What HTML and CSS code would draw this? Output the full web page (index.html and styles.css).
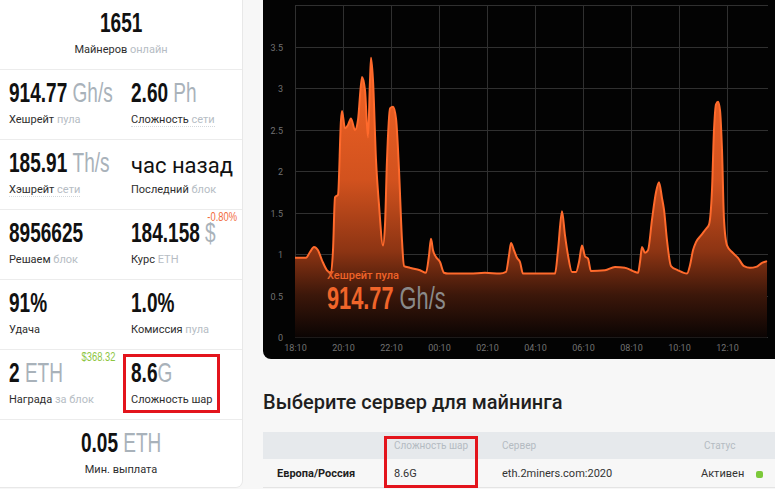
FILE: index.html
```html
<!DOCTYPE html>
<html lang="ru">
<head>
<meta charset="UTF-8">
<meta name="viewport" content="width=device-width, initial-scale=1.0">
<title>2Miners ETH</title>
<link rel="stylesheet" href="styles.css">
</head>
<body>

<div class="page">
    <aside class="stats">
        <div class="stat-row single">
            <div class="stat">
                <div class="val"><span class="num">1651</span></div>
                <div class="label">Майнеров <span class="muted">онлайн</span></div>
            </div>
        </div>
        <div class="stat-row">
            <div class="stat">
                <div class="val"><span class="num">914.77 <span class="unit">Gh/s</span></span></div>
                <div class="label">Хешрейт <span class="muted">пула</span></div>
            </div>
            <div class="stat">
                <div class="val"><span class="num">2.60 <span class="unit">Ph</span></span></div>
                <div class="label"><span class="hint">Сложность <span class="muted">сети</span></span></div>
            </div>
        </div>
        <div class="stat-row">
            <div class="stat">
                <div class="val"><span class="num">185.91 <span class="unit">Th/s</span></span></div>
                <div class="label"><span class="hint">Хэшрейт <span class="muted">сети</span></span></div>
            </div>
            <div class="stat">
                <div class="val words">час назад</div>
                <div class="label">Последний <span class="muted">блок</span></div>
            </div>
        </div>
        <div class="stat-row">
            <div class="stat">
                <div class="val"><span class="num">8956625</span></div>
                <div class="label">Решаем <span class="muted">блок</span></div>
            </div>
            <div class="stat">
                <span class="badge down">-0.80%</span>
                <div class="val"><span class="num">184.158 <span class="unit">$</span></span></div>
                <div class="label">Курс <span class="muted">ETH</span></div>
            </div>
        </div>
        <div class="stat-row">
            <div class="stat">
                <div class="val"><span class="num">91%</span></div>
                <div class="label">Удача</div>
            </div>
            <div class="stat">
                <div class="val"><span class="num">1.0%</span></div>
                <div class="label">Комиссия <span class="muted">пула</span></div>
            </div>
        </div>
        <div class="stat-row">
            <div class="stat">
                <span class="badge up">$368.32</span>
                <div class="val"><span class="num">2 <span class="unit">ETH</span></span></div>
                <div class="label">Награда <span class="muted">за блок</span></div>
            </div>
            <div class="stat">
                <div class="mark mark-share"></div>
                <div class="val"><span class="num">8.6<span class="unit">G</span></span></div>
                <div class="label">Сложность шар</div>
            </div>
        </div>
        <div class="stat-row single">
            <div class="stat">
                <div class="val"><span class="num">0.05 <span class="unit">ETH</span></span></div>
                <div class="label">Мин. выплата</div>
            </div>
        </div>
    </aside>

    <main class="main">
        <div class="chart">
            <svg class="chart-svg" width="530" height="359" viewBox="263 0 530 359">
                <defs>
                    <linearGradient id="hashFill" gradientUnits="userSpaceOnUse" x1="0" y1="50" x2="0" y2="338">
                        <stop offset="0" stop-color="#f46526"/>
                        <stop offset="0.45" stop-color="#d2521e"/>
                        <stop offset="0.7" stop-color="#8c3413"/>
                        <stop offset="0.85" stop-color="#3c170a"/>
                        <stop offset="1" stop-color="#0a0403"/>
                    </linearGradient>
                </defs>
                <g id="grid" stroke="#303030" stroke-width="1"></g>
                <g id="axis" class="axis"></g>
                <path id="hash-area" fill="url(#hashFill)"></path>
                <path id="hash-line" fill="none" stroke="#ff6a2c" stroke-width="2" stroke-linejoin="round"></path>
            </svg>
            <div class="chart-caption">
                <div class="caption-label">Хешрейт пула</div>
                <div class="caption-value"><span class="num">914.77 <span class="unit">Gh/s</span></span></div>
            </div>
        </div>

        <h2 class="servers-title">Выберите сервер для майнинга</h2>
        <div class="servers">
            <table class="server-table">
                <colgroup>
                    <col class="c-region">
                    <col class="c-diff">
                    <col class="c-host">
                    <col>
                </colgroup>
                <thead>
                    <tr><th></th><th>Сложность шар</th><th>Сервер</th><th>Статус</th></tr>
                </thead>
                <tbody>
                    <tr>
                        <td class="region">Европа/Россия</td>
                        <td>8.6G</td>
                        <td>eth.2miners.com:2020</td>
                        <td class="state">Активен<span class="dot"></span></td>
                    </tr>
                </tbody>
            </table>
            <div class="mark mark-table"></div>
        </div>
    </main>
</div>

<script>
    // pool hashrate, [x on the chart, Th/s]
    const hashrate = [
        [295, 0.96], [306, 0.96], [310, 1.03], [314, 1.09], [318, 1.05], [322, 0.93],
        [327, 0.81], [331, 0.78], [333, 1.05], [335, 1.69], [338, 1.72], [341, 2.62],
        [342, 2.73], [345, 2.52], [348, 2.56], [351, 2.64], [355, 2.50], [358, 2.62],
        [362, 3.14], [365, 2.98], [368, 2.41], [370, 3.10], [371, 3.37], [373, 3.10],
        [376, 2.14], [379, 1.60], [383, 1.11], [385, 1.36], [387, 2.14], [390, 2.76],
        [393, 2.78], [396, 2.64], [399, 2.02], [402, 1.17], [404, 0.86], [410, 0.84],
        [420, 0.81], [426, 0.78], [429, 0.99], [431, 1.19], [433, 1.05], [436, 0.97],
        [440, 0.91], [444, 0.78], [448, 0.77], [470, 0.77], [485, 0.78], [500, 0.77],
        [506, 0.79], [509, 0.99], [511, 1.14], [514, 1.05], [517, 0.96], [520, 0.91],
        [523, 0.77], [555, 0.77], [558, 1.05], [562, 1.52], [565, 1.23], [568, 0.99],
        [572, 0.79], [576, 0.79], [579, 0.91], [582, 1.11], [585, 0.98], [588, 0.95],
        [591, 0.80], [605, 0.81], [615, 0.85], [625, 0.84], [633, 0.80], [638, 0.78],
        [640, 0.91], [642, 1.09], [645, 1.02], [648, 1.05], [652, 1.42], [656, 1.75],
        [659, 1.87], [662, 1.68], [664, 1.54], [667, 1.17], [671, 0.86], [678, 0.81],
        [687, 0.77], [690, 0.87], [693, 1.05], [696, 1.15], [701, 1.23], [706, 1.31],
        [709, 1.36], [712, 1.78], [714, 2.50], [716, 2.81], [718, 2.84], [720, 2.74],
        [722, 2.26], [724, 1.42], [727, 1.11], [732, 1.03], [738, 0.96], [744, 0.86],
        [750, 0.84], [756, 0.85], [762, 0.90], [767, 0.92]
    ];

    const svgNS = "http://www.w3.org/2000/svg";
    const zeroY = 337.5;
    const perUnit = 83;
    const left = 295;
    const right = 768;

    function add(parent, tag, attrs, text) {
        const el = document.createElementNS(svgNS, tag);
        for (const key in attrs) el.setAttribute(key, attrs[key]);
        if (text) el.textContent = text;
        parent.appendChild(el);
        return el;
    }

    const grid = document.getElementById("grid");
    const axis = document.getElementById("axis");

    for (let i = 0; i <= 8; i++) {
        const y = Math.floor(zeroY - i * perUnit / 2) + 0.5;
        add(grid, "line", { x1: left, y1: y, x2: right, y2: y });
        if (i < 8) add(axis, "text", { x: 283, y: y + 3, "text-anchor": "end" }, String(i / 2));
    }

    for (let k = 0; k < 10; k++) {
        const x = left + 0.5 + k * 48;
        add(grid, "line", { x1: x, y1: 5.5, x2: x, y2: zeroY });
        const hour = String((18 + k * 2) % 24).padStart(2, "0");
        add(axis, "text", { x: x, y: 351, "text-anchor": "middle" }, hour + ":10");
    }

    // monotone cubic curve through the points, no overshoot on flat parts
    function monotonePath(p) {
        const n = p.length;
        const slopes = [];
        for (let i = 0; i < n - 1; i++) {
            slopes.push((p[i + 1][1] - p[i][1]) / (p[i + 1][0] - p[i][0]));
        }
        const tangents = [slopes[0]];
        for (let i = 1; i < n - 1; i++) {
            const s0 = slopes[i - 1];
            const s1 = slopes[i];
            if (s0 * s1 <= 0) {
                tangents.push(0);
                continue;
            }
            const h0 = p[i][0] - p[i - 1][0];
            const h1 = p[i + 1][0] - p[i][0];
            const mid = (s0 * h1 + s1 * h0) / (h0 + h1);
            tangents.push(2 * Math.sign(s0) * Math.min(Math.abs(s0), Math.abs(s1), 0.5 * Math.abs(mid)));
        }
        tangents.push(slopes[n - 2]);

        let d = "M" + p[0][0] + "," + p[0][1].toFixed(1);
        for (let i = 0; i < n - 1; i++) {
            const h = (p[i + 1][0] - p[i][0]) / 3;
            d += " C" + (p[i][0] + h).toFixed(1) + "," + (p[i][1] + tangents[i] * h).toFixed(1) +
                 " " + (p[i + 1][0] - h).toFixed(1) + "," + (p[i + 1][1] - tangents[i + 1] * h).toFixed(1) +
                 " " + p[i + 1][0] + "," + p[i + 1][1].toFixed(1);
        }
        return d;
    }

    const points = hashrate.map(([x, v]) => [x, zeroY - v * perUnit]);
    const line = monotonePath(points);
    const last = points[points.length - 1][0];
    document.getElementById("hash-line").setAttribute("d", line);
    document.getElementById("hash-area").setAttribute("d", line + " L" + last + "," + zeroY + " L" + left + "," + zeroY + " Z");
</script>

</body>
</html>
```

FILE: styles.css
```css
html, body {
    overflow: hidden;
}

body {
    margin: 0;
    background-color: #f7f7f7;
    font-family: Roboto, "Liberation Sans", sans-serif;
    color: #222;
}

.page {
    display: flex;
    gap: 21px;
}

/* left column with pool numbers */
.stats {
    flex: 0 0 242px;
    background-color: #fff;
    border-radius: 0 0 6px 0;
    box-shadow: 1px 0 0 #e8e8e8, 0 1px 0 #e8e8e8;
    align-self: flex-start;
}

.stat-row {
    display: grid;
    grid-template-columns: 121px 121px;
    border-top: 1px solid #ececec;
}

.stat-row:first-child {
    border-top: none;
}

.stat-row.single {
    grid-template-columns: 1fr;
    text-align: center;
}

.stat {
    position: relative;
    padding: 8px 0 12px 9px;
}

.stat + .stat {
    padding-left: 10px;
}

.single .stat {
    padding-left: 0;
}

.stat-row:last-child .stat {
    padding-bottom: 10px;
}

.val {
    height: 30px;
    font: bold 28px/30px "Liberation Sans", Arial, sans-serif;
    color: #111;
    white-space: nowrap;
}

.num {
    display: inline-block;
    transform: scaleX(0.68);
    transform-origin: left center;
}

.single .num {
    transform-origin: center;
}

.unit {
    font-weight: 400;
    color: #a9b2ba;
}

.val.words {
    font: 400 22px/35px Roboto, sans-serif;
}

.label {
    margin-top: 5px;
    font-size: 11px;
    line-height: 14px;
    color: #2e2e2e;
}

.muted {
    color: #b6bdc4;
}

.hint {
    border-bottom: 1px dotted #d3d8dc;
}

.badge {
    position: absolute;
    top: 1px;
    font: 12px/12px "Liberation Sans", Arial, sans-serif;
    transform: scaleX(0.78);
    transform-origin: right center;
}

.badge.down {
    right: 5px;
    color: #f26b3b;
}

.badge.up {
    right: 6px;
    color: #8dc63f;
}

.mark {
    position: absolute;
    box-sizing: border-box;
    border: 3px solid #e3141c;
}

.mark-share {
    left: 2px;
    top: 4px;
    width: 97px;
    height: 59px;
}

/* right column: chart and servers */
.main {
    flex: 0 0 530px;
}

.chart {
    position: relative;
    height: 359px;
    background-color: #030303;
    border-radius: 0 0 0 8px;
    overflow: hidden;
}

.chart-svg {
    display: block;
}

.axis {
    font-family: Roboto, sans-serif;
    font-size: 9px;
    fill: #727272;
}

.chart-caption {
    position: absolute;
    left: 64px;
    top: 269px;
}

.caption-label {
    font-size: 11px;
    line-height: 14px;
    font-weight: 500;
    color: #ee6329;
}

.caption-value {
    font: bold 32px/30px "Liberation Sans", Arial, sans-serif;
    color: #f0652a;
    white-space: nowrap;
}

.caption-value .unit {
    color: #8a8a8a;
}

.servers-title {
    margin: 31px 0 18px;
    font-size: 20px;
    line-height: 24px;
    font-weight: 500;
    color: #1f1f1f;
}

.servers {
    position: relative;
}

.server-table {
    width: 530px;
    border-collapse: collapse;
    table-layout: fixed;
    font-size: 11px;
}

.c-region {
    width: 117px;
}

.c-diff {
    width: 108px;
}

.c-host {
    width: 202px;
}

.server-table th {
    height: 27px;
    padding: 0 4px 0 14px;
    background-color: #e6e9ec;
    color: #b4bbc2;
    font-size: 10px;
    font-weight: 400;
    text-align: left;
    white-space: nowrap;
}

.server-table td {
    height: 28px;
    padding: 0 4px 0 14px;
    border-bottom: 1px solid #e4e4e4;
    color: #333;
    white-space: nowrap;
}

.server-table td.region {
    font-weight: 700;
    color: #1e1e1e;
}

.server-table td.state {
    padding-left: 11px;
}

.dot {
    display: inline-block;
    width: 7px;
    height: 7px;
    margin-left: 12px;
    border-radius: 2px;
    background-color: #7cc93a;
    vertical-align: -1px;
}

.mark-table {
    left: 121px;
    top: 4px;
    width: 94px;
    height: 52px;
}
```
